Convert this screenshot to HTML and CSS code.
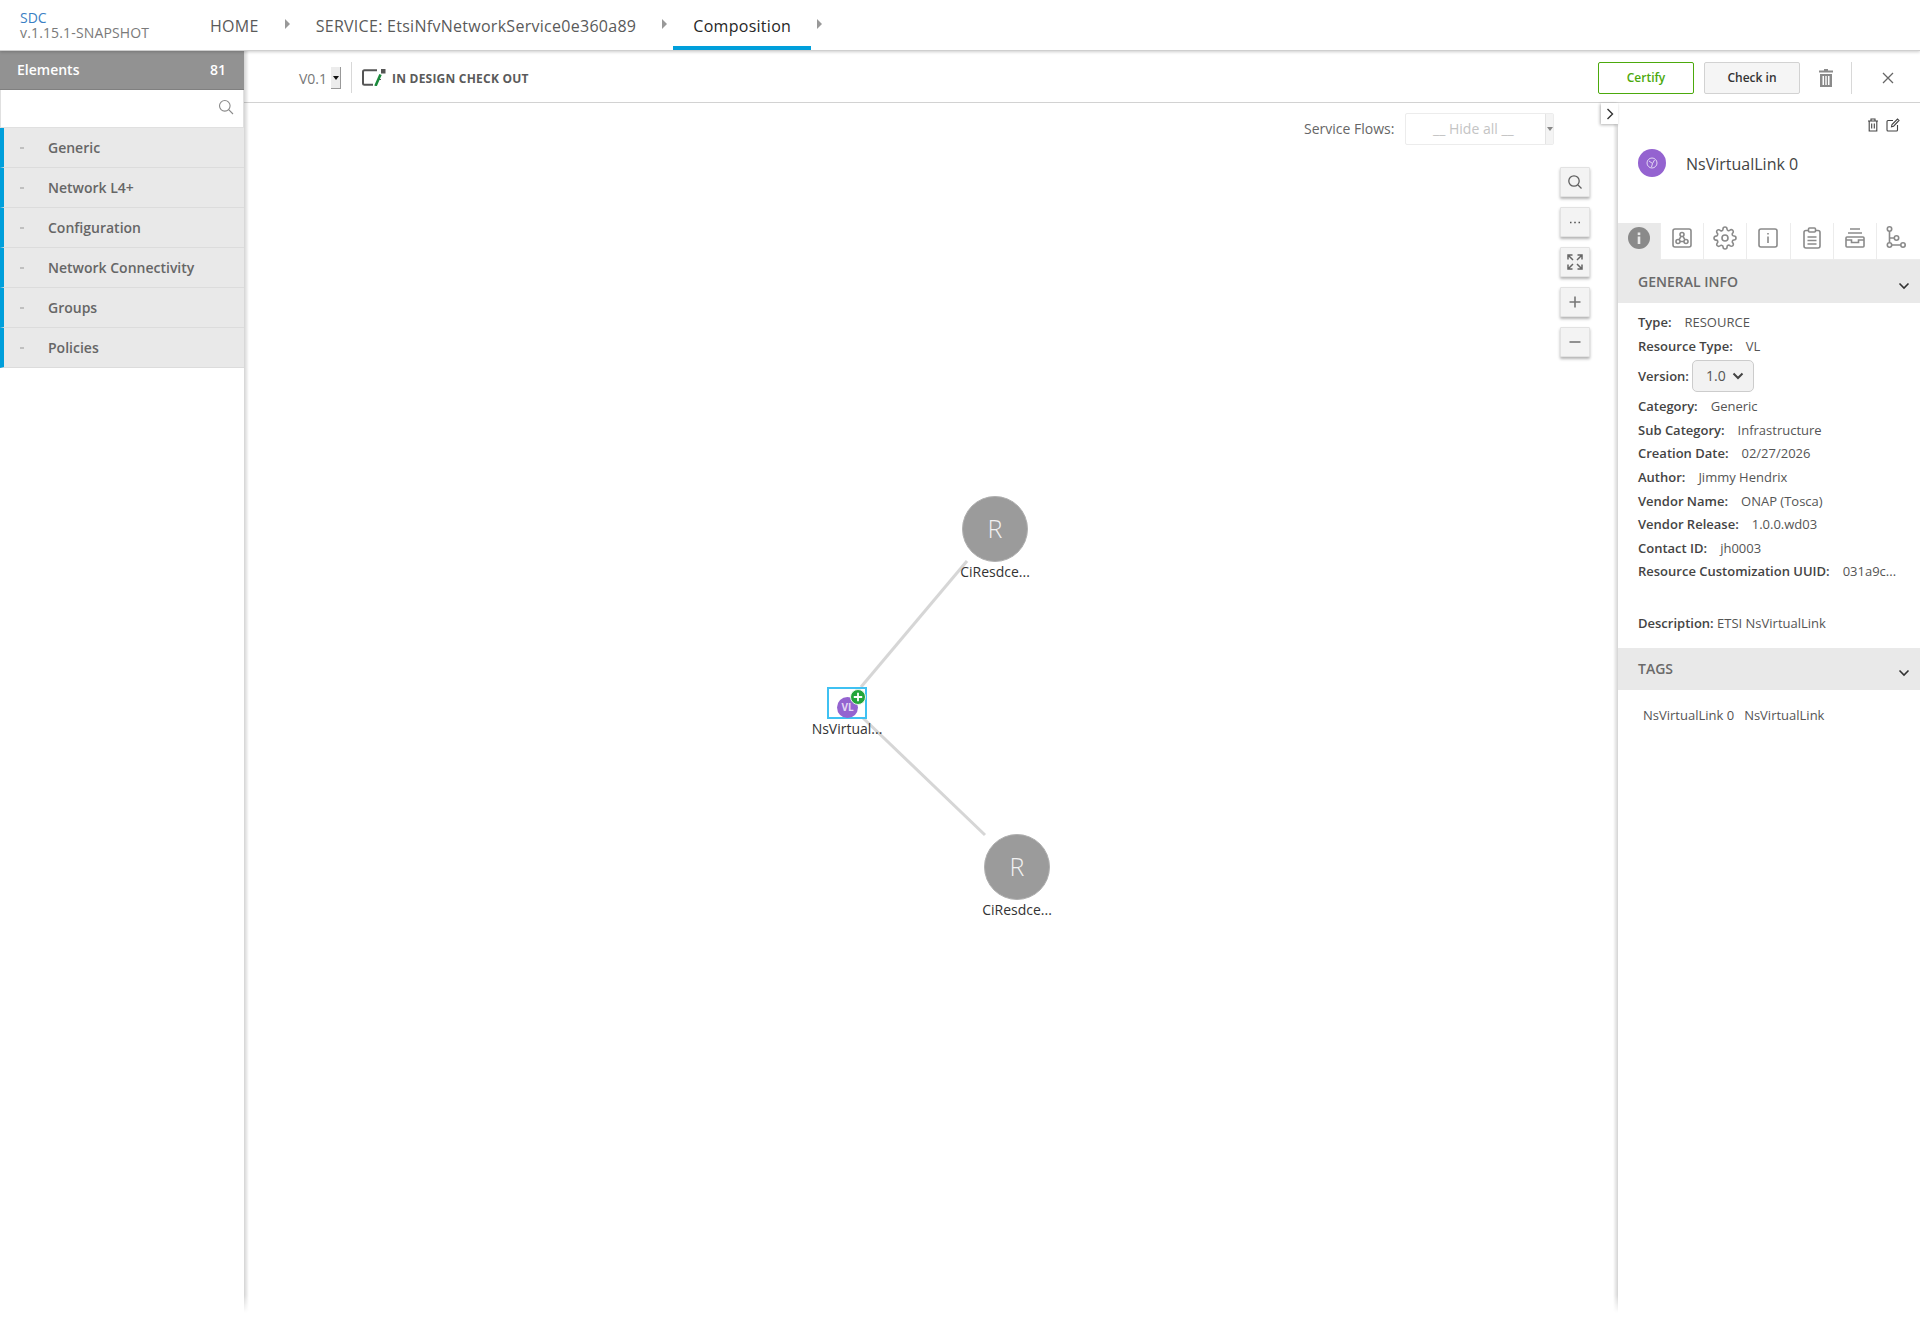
FILE: index.html
```html
<!DOCTYPE html>
<html lang="en">
<head>
    <meta charset="UTF-8">
    <meta name="viewport" content="width=device-width, initial-scale=1.0">
    <title>SDC Composition</title>
    <link rel="stylesheet" href="styles.css">
</head>
<body>
    <header class="topbar">
        <div class="logo">
            <div class="logo-name">SDC</div>
            <div class="logo-version">v.1.15.1-SNAPSHOT</div>
        </div>
        <nav class="crumbs">
            <a class="crumb">HOME</a>
            <span class="crumb-arrow"></span>
            <a class="crumb">SERVICE: EtsiNfvNetworkService0e360a89</a>
            <span class="crumb-arrow"></span>
            <a class="crumb crumb-active">Composition</a>
            <span class="crumb-arrow"></span>
        </nav>
    </header>

    <div class="main">
        <aside class="sidebar">
            <div class="elements-head">
                <span>Elements</span>
                <span>81</span>
            </div>
            <div class="search-box">
                <svg class="search-icon" viewBox="0 0 16 16" width="16" height="16"><circle cx="6.8" cy="6.8" r="5.3"/><path d="M10.7 10.7 L15 15"/></svg>
            </div>
            <div class="group"><span class="group-caret"></span>Generic</div>
            <div class="group"><span class="group-caret"></span>Network L4+</div>
            <div class="group"><span class="group-caret"></span>Configuration</div>
            <div class="group"><span class="group-caret"></span>Network Connectivity</div>
            <div class="group"><span class="group-caret"></span>Groups</div>
            <div class="group"><span class="group-caret"></span>Policies</div>
        </aside>

        <div class="content">
            <div class="toolbar">
                <span class="version-label">V0.1</span>
                <span class="version-drop"></span>
                <span class="toolbar-sep"></span>
                <svg class="checkout-icon" viewBox="0 0 24 17" width="24" height="17">
                    <path class="checkout-box" d="M15 1.2 H2.5 Q1 1.2 1 2.7 V14.3 Q1 15.8 2.5 15.8 H11"/>
                    <path class="checkout-box" d="M18 10 V11"/>
                    <rect class="checkout-dot" x="19" y="0" width="4.5" height="4.5"/>
                    <path class="checkout-pen" d="M18.5 5.5 L13.5 17"/>
                </svg>
                <span class="status-text">IN DESIGN CHECK OUT</span>
                <div class="toolbar-right">
                    <button class="btn btn-certify">Certify</button>
                    <button class="btn btn-checkin">Check in</button>
                    <svg class="bar-trash" viewBox="0 0 14 18" width="14" height="18">
                        <path d="M5 0 H9 V1.5 H14 V3.5 H0 V1.5 H5 Z"/>
                        <path d="M1 5 H13 V18 H1 Z M3.5 7 V16 H5 V7 Z M6.3 7 V16 H7.7 V7 Z M9 7 V16 H10.5 V7 Z" fill-rule="evenodd"/>
                    </svg>
                    <span class="toolbar-sep-right"></span>
                    <svg class="bar-close" viewBox="0 0 12 12" width="12" height="12"><path d="M1 1 L11 11 M11 1 L1 11"/></svg>
                </div>
            </div>

            <div class="workspace">
                <div class="canvas">
                    <div class="flows">
                        <span class="flows-label">Service Flows:</span>
                        <div class="flows-select">
                            <span class="flows-value">__ Hide all __</span>
                            <span class="flows-arrow"></span>
                        </div>
                    </div>

                    <div class="zoom-tools">
                        <button class="zoom-btn">
                            <svg viewBox="0 0 16 16" width="16" height="16"><circle cx="7" cy="7" r="5.2"/><path d="M11 11 L14.5 14.5"/></svg>
                        </button>
                        <button class="zoom-btn">
                            <svg viewBox="0 0 16 16" width="16" height="16"><path class="dots" d="M3 8.5 H4.5 M7.2 8.5 H8.8 M11.5 8.5 H13"/></svg>
                        </button>
                        <button class="zoom-btn">
                            <svg viewBox="0 0 16 16" width="16" height="16"><path class="fit" d="M1 5.5 V1 H5.5 M10.5 1 H15 V5.5 M15 10.5 V15 H10.5 M5.5 15 H1 V10.5 M1.5 1.5 L6 6 M14.5 1.5 L10 6 M14.5 14.5 L10 10 M1.5 14.5 L6 10"/></svg>
                        </button>
                        <button class="zoom-btn">
                            <svg viewBox="0 0 16 16" width="16" height="16"><path class="sign" d="M8 2.5 V13.5 M2.5 8 H13.5"/></svg>
                        </button>
                        <button class="zoom-btn">
                            <svg viewBox="0 0 16 16" width="16" height="16"><path class="sign" d="M2.5 8 H13.5"/></svg>
                        </button>
                    </div>

                    <svg class="links" width="1369" height="1207">
                        <line x1="723" y1="458" x2="617" y2="584"/>
                        <line x1="619" y1="615" x2="741" y2="732"/>
                    </svg>

                    <div class="node node-one">
                        <div class="node-circle">R</div>
                        <div class="node-label">CiResdce...</div>
                    </div>
                    <div class="node node-two">
                        <div class="node-circle">R</div>
                        <div class="node-label">CiResdce...</div>
                    </div>
                    <div class="vl-node">
                        <div class="vl-select">
                            <span class="vl-circle">VL</span>
                            <svg class="vl-plus" viewBox="0 0 16 16" width="16" height="16">
                                <circle cx="8" cy="8" r="7.5"/>
                                <path d="M8 3.8 V12.2 M3.8 8 H12.2"/>
                            </svg>
                        </div>
                        <div class="node-label">NsVirtual...</div>
                    </div>
                </div>

                <aside class="panel">
                    <button class="panel-toggle">
                        <svg viewBox="0 0 8 12" width="8" height="12"><path d="M1.5 1 L6.5 6 L1.5 11"/></svg>
                    </button>
                    <div class="panel-actions">
                        <svg class="panel-action" viewBox="0 0 12 14" width="12" height="14">
                            <path d="M1 3 H11 M4 3 V1 H8 V3 M2.2 3 V13 H9.8 V3 M4.7 5.5 V10.5 M7.3 5.5 V10.5"/>
                        </svg>
                        <svg class="panel-action" viewBox="0 0 14 14" width="14" height="14">
                            <path d="M7 2.5 H2 Q1 2.5 1 3.5 V12 Q1 13 2 13 H10.5 Q11.5 13 11.5 12 V7 M5.5 8.8 L6 6.5 L11.5 1 L13 2.5 L7.6 8.2 Z"/>
                        </svg>
                    </div>
                    <div class="panel-title">
                        <svg class="title-icon" viewBox="0 0 28 28" width="28" height="28">
                            <circle class="title-bg" cx="14" cy="14" r="14"/>
                            <circle class="title-ring" cx="14" cy="14" r="5"/>
                            <path class="title-ring" d="M11 12 L14.5 14.5 L16.5 11 M14.5 14.5 L13.5 18"/>
                        </svg>
                        <span class="title-text">NsVirtualLink 0</span>
                    </div>

                    <div class="tabs">
                        <div class="tab tab-active">
                            <svg viewBox="0 0 22 22" width="22" height="22">
                                <circle class="tab-fill" cx="11" cy="11" r="11"/>
                                <rect class="tab-white" x="9.7" y="9.5" width="2.6" height="7.5"/>
                                <rect class="tab-white" x="9.7" y="5.5" width="2.6" height="2.6"/>
                            </svg>
                        </div>
                        <div class="tab">
                            <svg class="tab-icon" viewBox="0 0 20 20" width="20" height="20">
                                <rect x="1" y="1" width="18" height="18" rx="2"/>
                                <circle cx="10" cy="6.5" r="2"/>
                                <circle cx="6" cy="13.5" r="2"/>
                                <circle cx="14" cy="13.5" r="2"/>
                                <path d="M9 8.3 L7 11.8 M11 8.3 L13 11.8 M8 13.5 H12"/>
                            </svg>
                        </div>
                        <div class="tab">
                            <svg class="tab-icon" viewBox="0 0 24 24" width="24" height="24">
                                <circle cx="12" cy="12" r="3"/>
                                <path d="M19.4 15a1.65 1.65 0 0 0 .33 1.82l.06.06a2 2 0 0 1 0 2.83 2 2 0 0 1-2.83 0l-.06-.06a1.65 1.65 0 0 0-1.82-.33 1.65 1.65 0 0 0-1 1.51V21a2 2 0 0 1-2 2 2 2 0 0 1-2-2v-.09A1.65 1.65 0 0 0 9 19.4a1.65 1.65 0 0 0-1.82.33l-.06.06a2 2 0 0 1-2.83 0 2 2 0 0 1 0-2.83l.06-.06a1.65 1.65 0 0 0 .33-1.82 1.65 1.65 0 0 0-1.51-1H3a2 2 0 0 1-2-2 2 2 0 0 1 2-2h.09A1.65 1.65 0 0 0 4.6 9a1.65 1.65 0 0 0-.33-1.82l-.06-.06a2 2 0 0 1 0-2.83 2 2 0 0 1 2.83 0l.06.06a1.65 1.65 0 0 0 1.82.33H9a1.65 1.65 0 0 0 1-1.51V3a2 2 0 0 1 2-2 2 2 0 0 1 2 2v.09a1.65 1.65 0 0 0 1 1.51 1.65 1.65 0 0 0 1.82-.33l.06-.06a2 2 0 0 1 2.83 0 2 2 0 0 1 0 2.83l-.06.06a1.65 1.65 0 0 0-.33 1.82V9a1.65 1.65 0 0 0 1.51 1H21a2 2 0 0 1 2 2 2 2 0 0 1-2 2h-.09a1.65 1.65 0 0 0-1.51 1z"/>
                            </svg>
                        </div>
                        <div class="tab">
                            <svg class="tab-icon" viewBox="0 0 20 20" width="20" height="20">
                                <rect x="1" y="1" width="18" height="18" rx="2"/>
                                <path d="M10 8.5 V15 M10 5 V6.5"/>
                            </svg>
                        </div>
                        <div class="tab">
                            <svg class="tab-icon" viewBox="0 0 18 22" width="18" height="22">
                                <path d="M5.5 3.5 H3 Q1 3.5 1 5.5 V19 Q1 21 3 21 H15 Q17 21 17 19 V5.5 Q17 3.5 15 3.5 H12.5"/>
                                <rect x="5.5" y="1" width="7" height="4" rx="1"/>
                                <path d="M4.5 10 H13.5 M4.5 13.5 H13.5 M4.5 17 H13.5"/>
                            </svg>
                        </div>
                        <div class="tab">
                            <svg class="tab-icon" viewBox="0 0 20 20" width="20" height="20">
                                <path d="M5 1 H15 M3 5 H17"/>
                                <rect x="1" y="9" width="18" height="10" rx="1"/>
                                <path d="M1 12 H6.5 V14.5 H13.5 V12 H19"/>
                            </svg>
                        </div>
                        <div class="tab tab-flow">
                            <svg class="tab-icon" viewBox="0 0 20 22" width="20" height="22">
                                <circle cx="3.5" cy="3" r="2.2"/>
                                <circle cx="3.5" cy="19" r="2.2"/>
                                <circle cx="10.5" cy="12" r="2.2"/>
                                <circle cx="17" cy="19" r="2.2"/>
                                <path d="M3.5 5.2 V16.8 M3.5 12 H8.3 M5.7 19 H14.8"/>
                            </svg>
                        </div>
                    </div>

                    <div class="section-head">
                        <span>GENERAL INFO</span>
                        <svg class="section-chevron" viewBox="0 0 12 8" width="12" height="8"><path d="M1.5 1.5 L6 6 L10.5 1.5"/></svg>
                    </div>
                    <div class="info-list">
                        <div class="info-row"><b>Type:</b><span>RESOURCE</span></div>
                        <div class="info-row info-row-tall"><b>Resource Type:</b><span>VL</span></div>
                        <div class="info-version">
                            <b>Version:</b>
                            <div class="version-select">
                                1.0
                                <svg viewBox="0 0 12 8" width="12" height="8"><path d="M1.5 1.5 L6 6 L10.5 1.5"/></svg>
                            </div>
                        </div>
                        <div class="info-row"><b>Category:</b><span>Generic</span></div>
                        <div class="info-row"><b>Sub Category:</b><span>Infrastructure</span></div>
                        <div class="info-row"><b>Creation Date:</b><span>02/27/2026</span></div>
                        <div class="info-row"><b>Author:</b><span>Jimmy Hendrix</span></div>
                        <div class="info-row"><b>Vendor Name:</b><span>ONAP (Tosca)</span></div>
                        <div class="info-row"><b>Vendor Release:</b><span>1.0.0.wd03</span></div>
                        <div class="info-row"><b>Contact ID:</b><span>jh0003</span></div>
                        <div class="info-row"><b>Resource Customization UUID:</b><span>031a9c...</span></div>
                        <div class="info-desc"><b>Description:</b> ETSI NsVirtualLink</div>
                    </div>
                    <div class="section-head section-tags">
                        <span>TAGS</span>
                        <svg class="section-chevron" viewBox="0 0 12 8" width="12" height="8"><path d="M1.5 1.5 L6 6 L10.5 1.5"/></svg>
                    </div>
                    <div class="tag-list">
                        <span>NsVirtualLink 0</span>
                        <span>NsVirtualLink</span>
                    </div>
                </aside>
            </div>
        </div>
    </div>
</body>
</html>
```

FILE: styles.css
```css
* {
    box-sizing: border-box;
}

html, body {
    margin: 0;
    padding: 0;
    height: 1319px;
    overflow: hidden;
    background: #fff;
    font-family: "Open Sans", "Noto Sans", sans-serif;
    color: #5a5a5a;
}

/* top bar */
.topbar {
    display: flex;
    height: 51px;
    padding-left: 20px;
    background: #fff;
    border-bottom: 1px solid #cfcfcf;
    box-shadow: 0 1px 3px rgba(0, 0, 0, 0.2);
    position: relative;
    z-index: 3;
}

.logo {
    width: 170px;
    padding-top: 9px;
    font-size: 14px;
    line-height: 17px;
}

.logo-name {
    color: #3a7fc4;
}

.logo-version {
    color: #7a7a7a;
    line-height: 14px;
    letter-spacing: 0.15px;
}

.crumbs {
    display: flex;
    height: 50px;
}

.crumb {
    padding: 0 20px;
    font-size: 16px;
    line-height: 52px;
    letter-spacing: 0.28px;
    color: #5a5a5a;
}

.crumb-active {
    color: #262626;
    border-bottom: 4px solid #009fdb;
}

.crumb-arrow {
    width: 0;
    height: 0;
    margin: 19px 6px 0;
    border-left: 5px solid #999;
    border-top: 5px solid transparent;
    border-bottom: 5px solid transparent;
}

/* main area */
.main {
    display: flex;
    height: 1262px;
}

.sidebar {
    width: 244px;
    flex-shrink: 0;
    background: #fff;
    position: relative;
    z-index: 2;
    margin-top: -1px;
}

/* side shadows fade out at the bottom of the page */
.sidebar::after, .panel::before {
    content: "";
    position: absolute;
    top: 0;
    bottom: 0;
    width: 5px;
    -webkit-mask-image: linear-gradient(to bottom, #000 calc(100% - 18px), transparent);
    mask-image: linear-gradient(to bottom, #000 calc(100% - 18px), transparent);
}

.sidebar::after {
    left: 100%;
    background: linear-gradient(to right, rgba(0, 0, 0, 0.17), transparent);
}

.panel::before {
    right: 100%;
    background: linear-gradient(to left, rgba(0, 0, 0, 0.17), transparent);
}

.elements-head {
    display: flex;
    justify-content: space-between;
    height: 40px;
    padding: 0 18px 0 17px;
    background: #929292;
    border-bottom: 1px solid #808080;
    color: #fff;
    font-size: 14px;
    font-weight: 600;
    line-height: 39px;
}

.search-box {
    display: flex;
    align-items: center;
    justify-content: flex-end;
    height: 38px;
    padding: 0 9px 3px 0;
    border: 1px solid #e0e0e0;
    border-top: 0;
}

.search-icon {
    fill: none;
    stroke: #8a8a8a;
    stroke-width: 1.1;
}

.group {
    display: flex;
    align-items: center;
    height: 40px;
    padding-left: 16px;
    background: #e9e9e9;
    border-left: 4px solid #009fdb;
    border-bottom: 1px solid #dcdcdc;
    font-size: 14px;
    font-weight: 600;
    color: #666;
}

.group-caret {
    width: 4px;
    height: 2px;
    margin-right: 24px;
    background: #c0c0c0;
}

.content {
    flex: 1;
    display: flex;
    flex-direction: column;
    min-width: 0;
}

/* toolbar */
.toolbar {
    display: flex;
    align-items: center;
    height: 52px;
    padding: 2px 0 0 55px;
    border-bottom: 1px solid #d2d2d2;
}

.version-label {
    margin: 2px 4px 0 0;
    font-size: 14px;
    color: #777;
}

.version-drop {
    position: relative;
    width: 10px;
    height: 22px;
    background: #ececec;
    border-right: 1px solid #999;
    border-bottom: 1px solid #999;
}

.version-drop::after {
    content: "";
    position: absolute;
    top: 9px;
    left: 2px;
    border-top: 4px solid #111;
    border-left: 3px solid transparent;
    border-right: 3px solid transparent;
}

.toolbar-sep {
    width: 1px;
    height: 31px;
    margin: 0 10px;
    background: #d8d8d8;
}

.checkout-icon {
    fill: none;
}

.checkout-box {
    stroke: #555;
    stroke-width: 2;
}

.checkout-dot {
    fill: #555;
}

.checkout-pen {
    stroke: #1a8a3c;
    stroke-width: 2.6;
}

.status-text {
    margin: 2px 0 0 6px;
    font-size: 12px;
    font-weight: 700;
    letter-spacing: 0.22px;
    color: #5a5a5a;
}

.toolbar-right {
    display: flex;
    align-items: center;
    margin-left: auto;
}

.btn {
    width: 96px;
    height: 32px;
    padding: 0;
    border-radius: 2px;
    font-family: inherit;
    font-size: 12px;
    font-weight: 600;
}

.btn-certify {
    background: #fff;
    border: 1px solid #4ca90c;
    color: #4ca90c;
    margin-right: 10px;
}

.btn-checkin {
    background: #f5f5f5;
    border: 1px solid #d2d2d2;
    color: #333;
}

.bar-trash {
    margin-left: 19px;
    fill: #8a8a8a;
}

.toolbar-sep-right {
    width: 1px;
    height: 32px;
    margin-left: 18px;
    background: #d8d8d8;
}

.bar-close {
    margin: 0 26px 0 30px;
    fill: none;
    stroke: #666;
    stroke-width: 1.3;
}

/* canvas */
.workspace {
    flex: 1;
    display: flex;
    min-height: 0;
}

.canvas {
    flex: 1;
    position: relative;
    min-width: 0;
}

.flows {
    display: flex;
    align-items: center;
    position: absolute;
    top: 10px;
    left: 1060px;
}

.flows-label {
    margin: -2px 11px 0 0;
    font-size: 14px;
    color: #666;
}

.flows-select {
    display: flex;
    align-items: center;
    width: 149px;
    height: 32px;
    border: 1px solid #ececec;
    border-radius: 2px;
    font-size: 14px;
    color: #c4c4c4;
}

.flows-value {
    flex: 1;
    margin-top: -2px;
    padding-right: 5px;
    text-align: center;
}

.flows-arrow {
    position: relative;
    width: 8px;
    height: 30px;
    background: #f4f4f4;
    border-left: 1px solid #e4e4e4;
}

.flows-arrow::after {
    content: "";
    position: absolute;
    top: 13px;
    left: 1px;
    border-top: 4px solid #888;
    border-left: 3px solid transparent;
    border-right: 3px solid transparent;
}

.zoom-tools {
    display: flex;
    flex-direction: column;
    gap: 10px;
    position: absolute;
    top: 64px;
    left: 1316px;
}

.zoom-btn {
    display: flex;
    align-items: center;
    justify-content: center;
    width: 30px;
    height: 30px;
    padding: 0;
    background: #f3f3f3;
    border: 1px solid #e2e2e2;
    border-radius: 1px;
    box-shadow: 0 2px 3px rgba(0, 0, 0, 0.3);
}

.zoom-btn svg {
    fill: none;
    stroke: #5f5f5f;
    stroke-width: 1.3;
}

.zoom-btn .dots {
    stroke: #555;
    stroke-width: 1.4;
}

.zoom-btn .fit {
    stroke: #666;
    stroke-width: 1.5;
}

.zoom-btn .sign {
    stroke: #777;
    stroke-width: 1.6;
}

.links {
    position: absolute;
    top: 0;
    left: 0;
}

.links line {
    stroke: #d6d6d6;
    stroke-width: 3;
}

.node {
    position: absolute;
    width: 100px;
    display: flex;
    flex-direction: column;
    align-items: center;
}

.node-one {
    left: 701px;
    top: 393px;
}

.node-two {
    left: 723px;
    top: 731px;
}

.node-circle {
    width: 66px;
    height: 66px;
    border-radius: 50%;
    background: #9b9b9b;
    border: 1px solid #b0b0b0;
    color: #f2f2f2;
    font-size: 25px;
    font-weight: 300;
    line-height: 62px;
    text-align: center;
}

.node-label {
    margin-top: 1px;
    font-size: 14px;
    line-height: 18px;
    color: #333;
    white-space: nowrap;
}

.vl-node {
    position: absolute;
    left: 553px;
    top: 584px;
    width: 100px;
    display: flex;
    flex-direction: column;
    align-items: center;
}

.vl-select {
    position: relative;
    width: 40px;
    height: 32px;
    border: 2px solid #3fc1f2;
    background: #fff;
}

.vl-circle {
    position: absolute;
    left: 8px;
    top: 8px;
    width: 21px;
    height: 21px;
    border-radius: 50%;
    background: #9463d0;
    color: #e4d8f4;
    font-size: 10px;
    font-weight: 700;
    line-height: 21px;
    text-align: center;
}

.vl-plus {
    position: absolute;
    left: 21px;
    top: 0;
    stroke: #fff;
    stroke-width: 1.8;
    fill: none;
}

.vl-plus circle {
    fill: #22a53a;
    stroke: #e6f2e6;
    stroke-width: 1;
}

/* right panel */
.panel {
    position: relative;
    width: 302px;
    flex-shrink: 0;
    background: #fff;
    font-size: 13px;
}

.panel-toggle {
    position: absolute;
    left: -17px;
    top: 0;
    display: flex;
    align-items: center;
    justify-content: center;
    width: 17px;
    height: 21px;
    padding: 0;
    background: #fff;
    border: 0;
    box-shadow: -1px 1px 3px rgba(0, 0, 0, 0.3);
    z-index: 1;
}

.panel-toggle svg {
    fill: none;
    stroke: #333;
    stroke-width: 1.4;
}

.panel-actions {
    display: flex;
    justify-content: flex-end;
    align-items: center;
    gap: 7px;
    height: 44px;
    padding-right: 20px;
}

.panel-action {
    fill: none;
    stroke: #444;
    stroke-width: 1.1;
}

.panel-title {
    display: flex;
    align-items: center;
    height: 32px;
    padding-left: 20px;
    margin-bottom: 44px;
    font-size: 16px;
    color: #444;
}

.title-text {
    margin-top: 2px;
}

.title-icon {
    margin-right: 20px;
}

.title-bg {
    fill: #9463d0;
}

.title-ring {
    fill: none;
    stroke: #e4d8f4;
    stroke-width: 1;
}

.tabs {
    display: flex;
    height: 37px;
}

.tab {
    display: flex;
    align-items: center;
    justify-content: center;
    flex: none;
    width: 43.14px;
    padding-bottom: 6px;
    border-right: 1px solid #ececec;
    border-bottom: 1px solid #ececec;
}

.tab:last-child {
    border-right: 0;
}

.tab-active {
    background: #e9e9e9;
    border-bottom: 0;
    padding-bottom: 7px;
}

.tab-fill {
    fill: #8a8a8a;
}

.tab-white {
    fill: #e9e9e9;
}

.tab-icon {
    fill: none;
    stroke: #8a8a8a;
    stroke-width: 1.6;
}

.tab-flow {
    justify-content: flex-start;
    align-items: flex-start;
    padding: 3px 0 0 9px;
}

.section-head {
    display: flex;
    align-items: center;
    justify-content: space-between;
    height: 43px;
    padding: 0 10px 0 20px;
    background: #e9e9e9;
    font-size: 14px;
    font-weight: 600;
    color: #6a6a6a;
}

.section-tags {
    height: 42px;
    padding-bottom: 2px;
}

.section-chevron {
    margin-top: 8px;
    fill: none;
    stroke: #333;
    stroke-width: 1.6;
}

.section-tags .section-chevron {
    margin-top: 10px;
}

.info-list {
    padding: 7.6px 20px 13px;
    color: #555;
}

.info-row {
    display: flex;
    height: 23.6px;
    line-height: 23.6px;
    white-space: nowrap;
}

.info-row-tall {
    margin-top: 0.8px;
}

.info-row b, .info-version b, .info-desc b {
    font-weight: 600;
    color: #444;
}

.info-row b {
    margin-right: 13px;
}

.info-version {
    display: flex;
    align-items: center;
    height: 32px;
    margin: 1px 0 3.6px;
}

.info-version b {
    margin-right: 3px;
}

.version-select {
    display: flex;
    align-items: center;
    justify-content: center;
    gap: 6px;
    width: 62px;
    height: 32px;
    padding-left: 4px;
    background: #f2f2f2;
    border: 1px solid #ccc;
    border-radius: 5px;
    font-size: 14px;
    color: #555;
}

.version-select svg {
    fill: none;
    stroke: #444;
    stroke-width: 2;
}

.info-desc {
    margin-top: 27.4px;
    line-height: 24px;
}

.tag-list {
    display: flex;
    gap: 10px;
    padding: 13px 0 0 25px;
    line-height: 24px;
    color: #555;
}
```
